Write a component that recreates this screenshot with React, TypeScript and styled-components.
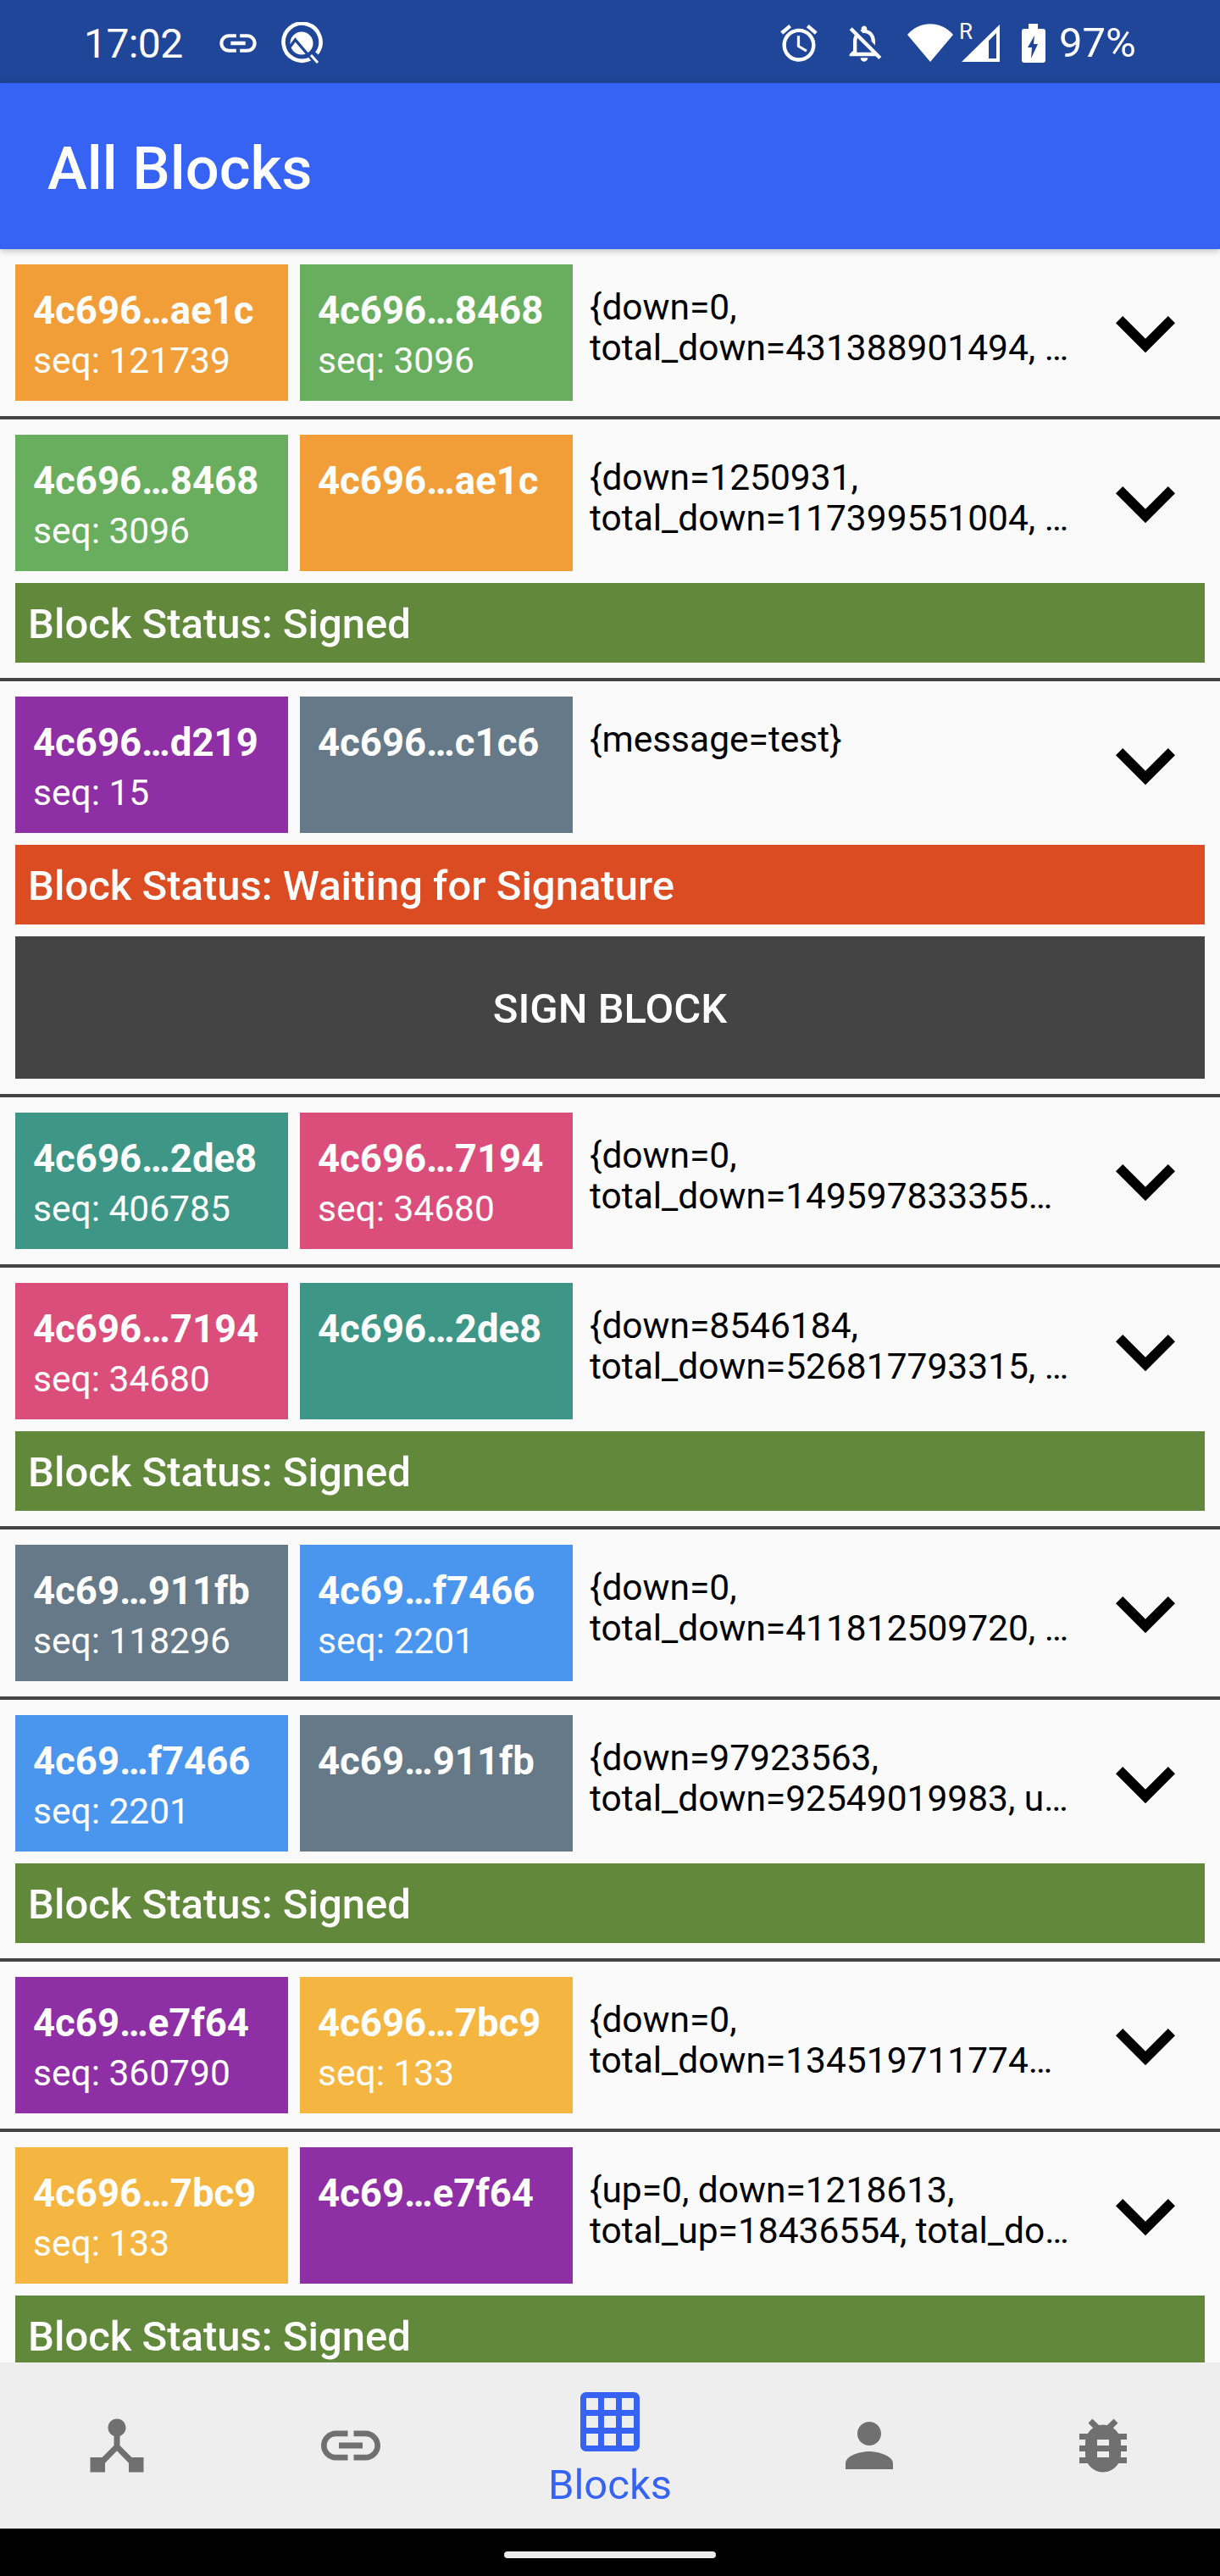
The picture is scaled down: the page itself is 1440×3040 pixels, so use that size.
import styled, { createGlobalStyle } from "styled-components";
import {
  MdAccessAlarm,
  MdBugReport,
  MdDeviceHub,
  MdGridOn,
  MdKeyboardArrowDown,
  MdLink,
  MdOutlineNotificationsOff,
  MdPerson,
} from "react-icons/md";

const colors = {
  orange: "#f29e38",
  green: "#69ae5e",
  purple: "#8e2fa6",
  slate: "#667988",
  teal: "#3e9786",
  pink: "#db4d7a",
  blue: "#4a96ee",
  yellow: "#f4b640",
};

type Chip = { title: string; seq?: string; color: string };
type Block = {
  from: Chip;
  to: Chip;
  lines: string[];
  status?: "signed" | "waiting";
  canSign?: boolean;
};

const blocks: Block[] = [
  {
    from: { title: "4c696…ae1c", seq: "seq: 121739", color: colors.orange },
    to: { title: "4c696…8468", seq: "seq: 3096", color: colors.green },
    lines: ["{down=0,", "total_down=431388901494, …"],
  },
  {
    from: { title: "4c696…8468", seq: "seq: 3096", color: colors.green },
    to: { title: "4c696…ae1c", color: colors.orange },
    lines: ["{down=1250931,", "total_down=117399551004, …"],
    status: "signed",
  },
  {
    from: { title: "4c696…d219", seq: "seq: 15", color: colors.purple },
    to: { title: "4c696…c1c6", color: colors.slate },
    lines: ["{message=test}"],
    status: "waiting",
    canSign: true,
  },
  {
    from: { title: "4c696…2de8", seq: "seq: 406785", color: colors.teal },
    to: { title: "4c696…7194", seq: "seq: 34680", color: colors.pink },
    lines: ["{down=0,", "total_down=149597833355…"],
  },
  {
    from: { title: "4c696…7194", seq: "seq: 34680", color: colors.pink },
    to: { title: "4c696…2de8", color: colors.teal },
    lines: ["{down=8546184,", "total_down=526817793315, …"],
    status: "signed",
  },
  {
    from: { title: "4c69…911fb", seq: "seq: 118296", color: colors.slate },
    to: { title: "4c69…f7466", seq: "seq: 2201", color: colors.blue },
    lines: ["{down=0,", "total_down=411812509720, …"],
  },
  {
    from: { title: "4c69…f7466", seq: "seq: 2201", color: colors.blue },
    to: { title: "4c69…911fb", color: colors.slate },
    lines: ["{down=97923563,", "total_down=92549019983, u…"],
    status: "signed",
  },
  {
    from: { title: "4c69…e7f64", seq: "seq: 360790", color: colors.purple },
    to: { title: "4c696…7bc9", seq: "seq: 133", color: colors.yellow },
    lines: ["{down=0,", "total_down=134519711774…"],
  },
  {
    from: { title: "4c696…7bc9", seq: "seq: 133", color: colors.yellow },
    to: { title: "4c69…e7f64", color: colors.purple },
    lines: ["{up=0, down=1218613,", "total_up=18436554, total_do…"],
    status: "signed",
  },
];

function QLogo() {
  return (
    <svg width="50" height="50" viewBox="0 0 50 50">
      <path
        d="M36 43A22 22 0 1 1 43 37"
        fill="none"
        stroke="#fff"
        strokeWidth="4.6"
      />
      <circle cx="25" cy="25" r="13.5" fill="#fff" />
      <path
        d="M10 31L17.5 21L38 45"
        fill="none"
        stroke="#1f4699"
        strokeWidth="3.4"
      />
      <path d="M36 39L44 48" stroke="#fff" strokeWidth="3" />
    </svg>
  );
}

function WifiIcon() {
  return (
    <svg width="54" height="46" viewBox="0 0 54 46">
      <path d="M0 13C14 -4 40 -4 54 13L27 45z" fill="#fff" />
    </svg>
  );
}

function SignalIcon() {
  return (
    <svg width="46" height="46" viewBox="0 0 46 46">
      <path
        d="M45 1V45H0zM32 20V41H41V11z"
        fill="#fff"
        fillRule="evenodd"
      />
    </svg>
  );
}

function BatteryIcon() {
  return (
    <svg width="28" height="46" viewBox="0 0 28 46">
      <path
        d="M8 0h11v6h6a3 3 0 0 1 3 3v34a3 3 0 0 1-3 3H3a3 3 0 0 1-3-3V9a3 3 0 0 1 3-3h5zM15 14L7 28h5l-1 13 8-17h-5z"
        fill="#fff"
        fillRule="evenodd"
      />
    </svg>
  );
}

function BlockChip({ chip }: { chip: Chip }) {
  return (
    <ChipBox $color={chip.color}>
      <ChipTitle>{chip.title}</ChipTitle>
      {chip.seq && <ChipSeq>{chip.seq}</ChipSeq>}
    </ChipBox>
  );
}

function BlockRow({ block }: { block: Block }) {
  return (
    <Row>
      <RowTop>
        <BlockChip chip={block.from} />
        <BlockChip chip={block.to} />
        <DataText>
          {block.lines.map((line) => (
            <DataLine key={line}>{line}</DataLine>
          ))}
        </DataText>
        <Chevron>
          <MdKeyboardArrowDown size={140} />
        </Chevron>
      </RowTop>
      {block.status === "signed" && (
        <StatusBar $color="#62883c">Block Status: Signed</StatusBar>
      )}
      {block.status === "waiting" && (
        <StatusBar $color="#dc4c22">Block Status: Waiting for Signature</StatusBar>
      )}
      {block.canSign && <SignButton>SIGN BLOCK</SignButton>}
    </Row>
  );
}

export default function App() {
  return (
    <Screen>
      <GlobalStyle />
      <StatusArea>
        <StatusLeft>
          <Clock>17:02</Clock>
          <MdLink size={52} />
          <QLogo />
        </StatusLeft>
        <StatusRight>
          <MdAccessAlarm size={52} />
          <MdOutlineNotificationsOff size={52} />
          <WifiIcon />
          <SignalBox>
            <RoamingMark>R</RoamingMark>
            <SignalIcon />
          </SignalBox>
          <BatteryIcon />
          <BatteryLevel>97%</BatteryLevel>
        </StatusRight>
      </StatusArea>
      <AppBar>All Blocks</AppBar>
      <BlockList>
        {blocks.map((block, i) => (
          <BlockRow key={i} block={block} />
        ))}
      </BlockList>
      <BottomNav>
        <NavItem>
          <MdDeviceHub size={84} />
        </NavItem>
        <NavItem>
          <MdLink size={84} />
        </NavItem>
        <ActiveNavItem>
          <MdGridOn size={84} />
          <NavLabel>Blocks</NavLabel>
        </ActiveNavItem>
        <NavItem>
          <MdPerson size={84} />
        </NavItem>
        <NavItem>
          <MdBugReport size={84} />
        </NavItem>
      </BottomNav>
      <GestureArea>
        <HomePill />
      </GestureArea>
    </Screen>
  );
}

const GlobalStyle = createGlobalStyle`
  html, body {
    margin: 0;
    padding: 0;
    background: #000;
  }
`;

const Screen = styled.div`
  width: 1440px;
  height: 3040px;
  display: flex;
  flex-direction: column;
  overflow: hidden;
  font-family: Roboto, "Noto Sans", sans-serif;
  background: #fafafa;
`;

const StatusArea = styled.div`
  flex: 0 0 98px;
  box-sizing: border-box;
  display: flex;
  justify-content: space-between;
  align-items: center;
  padding: 4px 101px 0 99px;
  background: #1f4699;
  color: #fff;
`;

const StatusLeft = styled.div`
  display: flex;
  align-items: center;
  gap: 24px;
`;

const StatusRight = styled.div`
  display: flex;
  align-items: center;
  gap: 25px;
`;

const Clock = styled.span`
  padding-top: 2px;
  margin-right: 15px;
  font-size: 48px;
  line-height: 58px;
  letter-spacing: -0.6px;
`;

const BatteryLevel = styled.span`
  font-size: 49px;
  line-height: 58px;
  margin-left: -9px;
  margin-right: -2px;
`;

const SignalBox = styled.div`
  position: relative;
  display: flex;
  margin-left: -15px;
`;

const RoamingMark = styled.span`
  position: absolute;
  left: -3px;
  top: -6px;
  font-size: 26px;
  line-height: 30px;
`;

const AppBar = styled.header`
  flex: 0 0 196px;
  box-sizing: border-box;
  display: flex;
  align-items: center;
  padding: 5px 0 0 56px;
  background: #3763f4;
  color: #fff;
  font-size: 70.5px;
  font-weight: 500;
  box-shadow: 0 2px 8px rgba(0, 0, 0, 0.25);
  z-index: 1;
`;

const BlockList = styled.main`
  flex: 1;
  min-height: 0;
  overflow: hidden;
  background: #fafafa;
`;

const Row = styled.section`
  display: flex;
  flex-direction: column;
  gap: 14px;
  padding: 18px;
  border-bottom: 4px solid #444;
`;

const RowTop = styled.div`
  display: flex;
  align-items: stretch;
  gap: 14px;
  height: 161px;
`;

const ChipBox = styled.div<{ $color: string }>`
  flex: 0 0 322px;
  box-sizing: border-box;
  padding: 28px 21px 0;
  background: ${(p) => p.$color};
  color: #fff;
`;

const ChipTitle = styled.div`
  font-size: 45.5px;
  line-height: 54px;
  font-weight: 700;
  white-space: nowrap;
`;

const ChipSeq = styled.div`
  margin-top: 5px;
  font-size: 42.5px;
  line-height: 54px;
  white-space: nowrap;
`;

const DataText = styled.div`
  flex: 1;
  min-width: 0;
  padding: 27px 0 0 6px;
  color: #000;
  font-size: 42.5px;
  line-height: 48px;
`;

const DataLine = styled.div`
  white-space: nowrap;
`;

const Chevron = styled.div`
  flex: 0 0 140px;
  display: flex;
  align-items: center;
  justify-content: center;
  color: #000;
`;

const StatusBar = styled.div<{ $color: string }>`
  height: 94px;
  box-sizing: border-box;
  display: flex;
  align-items: center;
  padding: 3px 0 0 15px;
  background: ${(p) => p.$color};
  color: #fff;
  font-size: 49px;
  font-weight: 500;
`;

const SignButton = styled.button`
  height: 168px;
  padding: 3px 0 0;
  border: 0;
  background: #444;
  color: #fff;
  font-family: inherit;
  font-size: 49px;
  font-weight: 500;
`;

const BottomNav = styled.nav`
  flex: 0 0 196px;
  display: grid;
  grid-template-columns: 276px 276px 336px 276px 276px;
  background: #eee;
  color: #707070;
  z-index: 1;
`;

const NavItem = styled.div`
  display: flex;
  align-items: center;
  justify-content: center;
`;

const ActiveNavItem = styled.div`
  display: flex;
  flex-direction: column;
  align-items: center;
  padding-top: 28px;
  color: #3763f4;
`;

const NavLabel = styled.span`
  margin-top: 4px;
  font-size: 49px;
  line-height: 57px;
`;

const GestureArea = styled.div`
  flex: 0 0 56px;
  display: flex;
  justify-content: center;
  padding-top: 27px;
  box-sizing: border-box;
  background: #000;
`;

const HomePill = styled.div`
  width: 250px;
  height: 8px;
  border-radius: 4px;
  background: #eee;
`;
